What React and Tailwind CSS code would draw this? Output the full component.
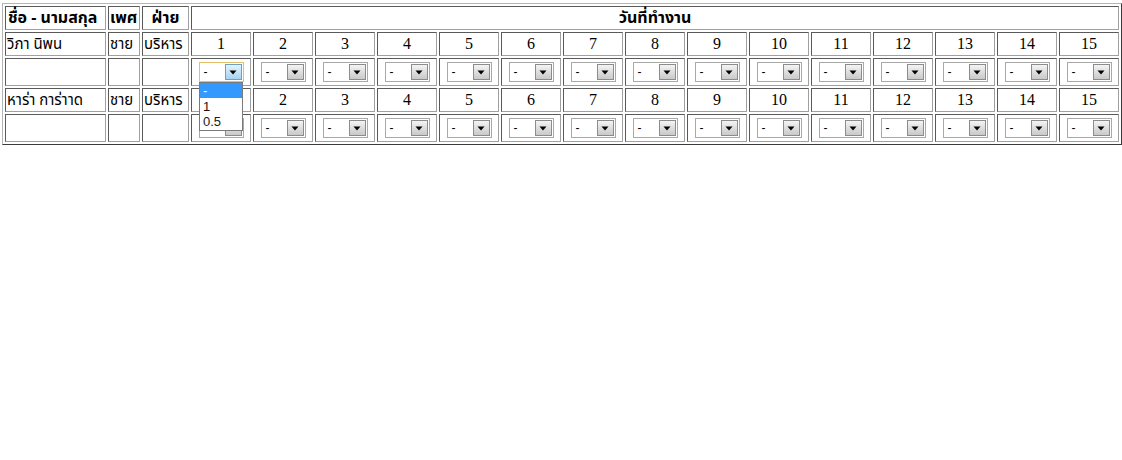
import React from "react";

const days = Array.from({ length: 15 }, (_, i) => i + 1);

const people = [
  { name: "วิภา นิพน", sex: "ชาย", dept: "บริหาร" },
  { name: "หาร่า การ่าาด", sex: "ชาย", dept: "บริหาร" },
];

const thai = "font-['Tahoma','Noto_Sans_Thai','Noto_Sans',sans-serif]";
const serif = "font-['Liberation_Serif','Times_New_Roman',serif]";
const arial = "font-['Liberation_Sans',Arial,sans-serif]";

const cell =
  "border border-solid border-t-[#5a5a5a] border-l-[#5a5a5a] border-b-[#a0a0a0] border-r-[#a0a0a0] p-0";

const Select = ({ focused }) => (
  <div
    className={
      "relative mx-auto flex h-[20px] w-[45px] items-center border bg-white " +
      (focused ? "border-[#e3c06a]" : "border-[#a9a9a9]")
    }
  >
    <span className={"pl-[4px] text-[12px] leading-none text-black " + arial}>-</span>
    <div
      className={
        "ml-auto mr-[1px] flex h-[16px] w-[17px] items-center justify-center border " +
        (focused
          ? "border-[#6f9fc2] bg-gradient-to-b from-[#e4f3fc] to-[#a7d2f0]"
          : "border-[#8c8c8c] bg-gradient-to-b from-[#f4f4f4] to-[#c9c9c9]")
      }
    >
      <svg width="8" height="5" viewBox="0 0 8 5">
        <path d="M0.5 0.5h7L4 4.5z" fill="#000" />
      </svg>
    </div>
  </div>
);

const Dropdown = () => (
  <div
    className={
      "absolute left-[7px] top-[23px] z-10 w-[44px] border border-[#7a7a7a] bg-white text-[13px] leading-[15px] " +
      arial
    }
  >
    <div className="h-[15px] bg-[#3399ff] pl-[3px] text-white">-</div>
    <div className="h-[16px] pl-[3px] pt-[1px] text-[#2a0a0a]">1</div>
    <div className="h-[16px] pl-[3px] text-[#1a1a1a]">0.5</div>
  </div>
);

export default function App() {
  return (
    <div className="min-h-[460px] bg-white pl-[2px] pt-[3px]">
      <table className="w-[1120px] table-fixed border-separate border-spacing-[2px] border border-solid border-t-[#b5b5b5] border-l-[#b5b5b5] border-b-[#3c3c3c] border-r-[#3c3c3c] text-black">
        <colgroup>
          <col className="w-[101px]" />
          <col className="w-[32px]" />
          <col className="w-[47px]" />
          {days.map((d) => (
            <col key={d} className="w-[60px]" />
          ))}
        </colgroup>
        <tbody>
          <tr className="h-[24px]">
            <td className={cell + " pl-[2px] text-[16px] font-bold leading-none " + thai}>ชื่อ - นามสกุล</td>
            <td className={cell + " pl-[1px] text-[16px] font-bold leading-none " + thai}>เพศ</td>
            <td className={cell + " text-center text-[16px] font-bold leading-none " + thai}>ฝ่าย</td>
            <td colSpan={15} className={cell + " text-center text-[16px] font-bold leading-none " + thai}>
              วันที่ทำงาน
            </td>
          </tr>
          {people.map((p, idx) => (
            <React.Fragment key={p.name}>
              <tr className="h-[24px]">
                <td className={cell + " pl-[1px] text-[15px] leading-none " + thai}>{p.name}</td>
                <td className={cell + " pl-[1px] text-[15px] leading-none " + thai}>{p.sex}</td>
                <td className={cell + " pl-[1px] text-[15px] leading-none " + thai}>{p.dept}</td>
                {days.map((d) => (
                  <td key={d} className={cell + " text-center text-[16px] leading-none " + serif}>
                    {d}
                  </td>
                ))}
              </tr>
              <tr className="h-[28px]">
                <td className={cell}></td>
                <td className={cell}></td>
                <td className={cell}></td>
                {days.map((d) => (
                  <td key={d} className={cell + " relative align-middle"}>
                    <Select focused={idx === 0 && d === 1} />
                    {idx === 0 && d === 1 && <Dropdown />}
                  </td>
                ))}
              </tr>
            </React.Fragment>
          ))}
        </tbody>
      </table>
    </div>
  );
}
